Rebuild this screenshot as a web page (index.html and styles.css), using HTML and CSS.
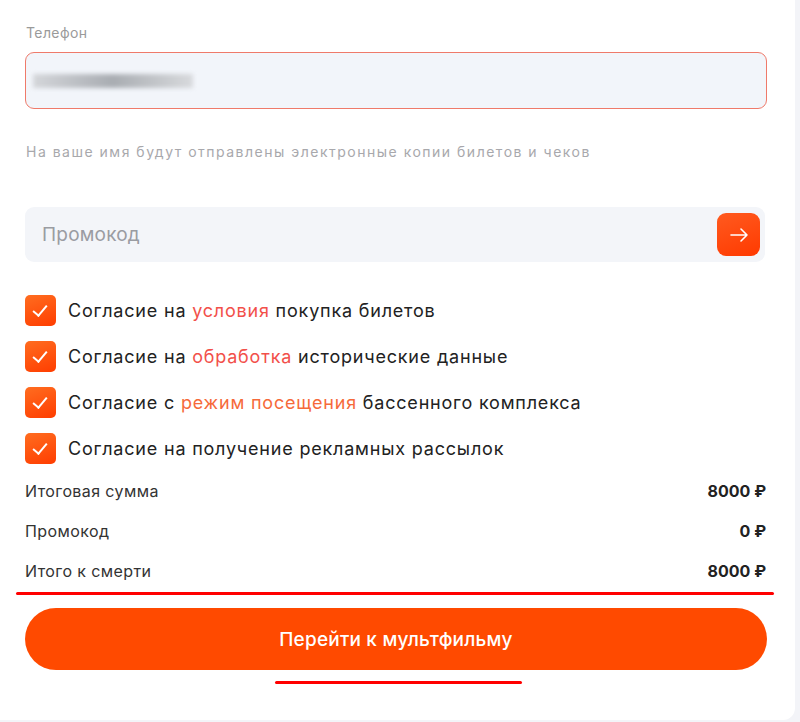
FILE: index.html
```html
<!DOCTYPE html>
<html lang="ru">
<head>
  <meta charset="UTF-8">
  <title>Оформление заказа</title>
  <link rel="stylesheet" href="styles.css">
</head>
<body>

  <div class="card">
    <label class="field-label">Телефон</label>
    <div class="phone-input">
      <span class="phone-blur"></span>
    </div>

    <p class="hint">На ваше имя будут отправлены электронные копии билетов и чеков</p>

    <div class="promo">
      <span class="promo-placeholder">Промокод</span>
      <button class="promo-btn">
        <svg width="20" height="20" viewBox="0 0 20 20" fill="none" stroke="#fff" stroke-width="1.6" stroke-linecap="round" stroke-linejoin="round">
          <path d="M2 10h16M12 4l6 6-6 6"/>
        </svg>
      </button>
    </div>

    <ul class="agreements">
      <li><span class="check"></span>Согласие на <a href="#">условия</a> покупка билетов</li>
      <li><span class="check"></span>Согласие на <a href="#">обработка</a> исторические данные</li>
      <li><span class="check"></span>Согласие с <a href="#" class="orange">режим посещения</a> бассенного комплекса</li>
      <li><span class="check"></span>Согласие на получение рекламных рассылок</li>
    </ul>

    <div class="summary">
      <div class="summary-row"><span>Итоговая сумма</span><b>8000 ₽</b></div>
      <div class="summary-row"><span>Промокод</span><b>0 ₽</b></div>
      <div class="summary-row"><span>Итого к смерти</span><b>8000 ₽</b></div>
    </div>
    <div class="red-line"></div>

    <button class="submit">Перейти к мультфильму</button>
    <div class="red-line short"></div>
  </div>

</body>
</html>
```

FILE: styles.css
```css
body {
  margin: 0;
  background-color: #f3f4f8;
  font-family: Inter, "Noto Sans", sans-serif;
}

.card {
  width: 795px;
  box-sizing: border-box;
  background: #fff;
  padding: 25px 28px 36px 25px;
  border-bottom-right-radius: 12px;
}

.field-label {
  display: block;
  font-size: 14px;
  letter-spacing: 0.4px;
  line-height: 16px;
  color: #9a9a9a;
  margin-left: 1px;
  margin-bottom: 11px;
}

.phone-input {
  height: 57px;
  box-sizing: border-box;
  border: 1px solid #ef7a6a;
  border-radius: 9px;
  background: #f2f5fa;
  display: flex;
  align-items: center;
  padding-left: 7px;
}

.phone-blur {
  width: 160px;
  height: 14px;
  background: linear-gradient(90deg, #d4d6da, #a9adb2 50%, #d8dadd);
  filter: blur(2px);
}

.hint {
  margin: 35px 0 0 1px;
  font-size: 14px;
  letter-spacing: 1.5px;
  line-height: 16px;
  color: #a8a8ac;
}

.promo {
  margin-top: 47px;
  height: 55px;
  background: #f3f5f9;
  border-radius: 9px;
  display: flex;
  align-items: center;
  justify-content: space-between;
  padding: 0 5px 0 17px;
  width: 740px;
  box-sizing: border-box;
}

.promo-placeholder {
  font-size: 19px;
  letter-spacing: 0.2px;
  color: #9a9ca2;
}

.promo-btn {
  width: 43px;
  height: 43px;
  border: none;
  border-radius: 9px;
  background: linear-gradient(160deg, #ff5a1f, #ff3a00);
  display: flex;
  align-items: center;
  justify-content: center;
  padding: 0;
  cursor: pointer;
}

.agreements {
  list-style: none;
  margin: 33px 0 0;
  padding: 0;
  display: flex;
  flex-direction: column;
  gap: 15px;
}

.agreements li {
  display: flex;
  align-items: center;
  height: 31px;
  font-size: 18px;
  letter-spacing: 0.8px;
  color: #222;
  white-space: pre;
}

.agreements a {
  color: #f2504a;
  text-decoration: none;
}

.agreements a.orange {
  color: #f66a3a;
}

.check {
  width: 31px;
  height: 31px;
  border-radius: 5px;
  background: linear-gradient(160deg, #ff6d20, #ff3d00);
  margin-right: 12px;
  position: relative;
  flex-shrink: 0;
}

.check::after {
  content: "";
  position: absolute;
  left: 11px;
  top: 7px;
  width: 6px;
  height: 12px;
  border: solid #fff;
  border-width: 0 2px 2px 0;
  transform: rotate(40deg);
}

.summary {
  margin-top: 7px;
  width: 741px;
}

.summary-row {
  display: flex;
  justify-content: space-between;
  align-items: center;
  height: 40px;
  font-size: 16px;
  letter-spacing: 0.4px;
  color: #333;
}

.summary-row b {
  font-weight: 700;
  letter-spacing: 0;
  color: #222;
}

.red-line {
  height: 3px;
  background: #f00;
  border-radius: 2px;
  margin: 1px 0 0 -9px;
  width: 758px;
}

.red-line.short {
  width: 247px;
  margin: 11px 0 0 250px;
}

.submit {
  display: block;
  margin-top: 13px;
  width: 742px;
  height: 62px;
  border: none;
  border-radius: 31px;
  background: #ff4a00;
  color: #fff;
  font-family: Inter, "Noto Sans", sans-serif;
  font-size: 19px;
  letter-spacing: 0.2px;
  font-weight: 500;
  cursor: pointer;
}
```
